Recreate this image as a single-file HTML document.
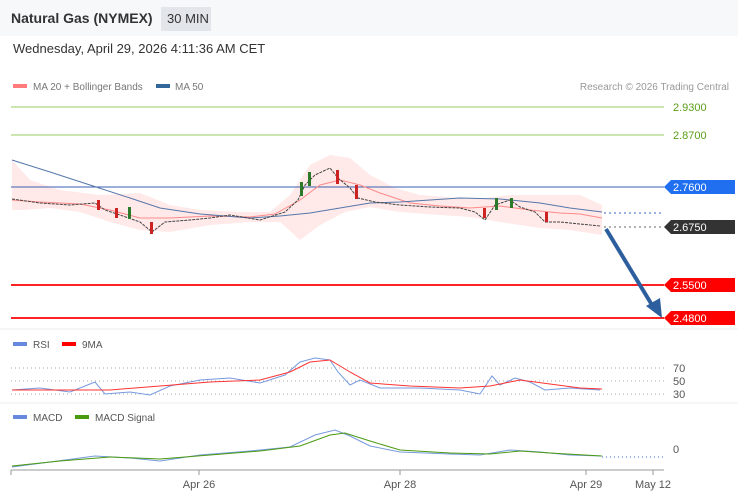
<!DOCTYPE html><html><head><style>
body{margin:0;width:738px;height:500px;overflow:hidden;background:#fff;font-family:"Liberation Sans",sans-serif;position:relative}
.hdr{position:absolute;left:0;top:0;width:738px;height:36px;background:#f7f8fa}
.t{position:absolute;white-space:nowrap}
</style></head><body>
<div class="hdr"></div>
<div class="t" style="left:11px;top:10px;font-size:14px;font-weight:bold;color:#333">Natural Gas (NYMEX)</div>
<div style="position:absolute;left:161px;top:7px;width:50px;height:24px;background:#e2e5ea"></div>
<div class="t" style="left:167px;top:11px;font-size:13px;color:#333">30 MIN</div>
<div class="t" style="left:13px;top:41px;font-size:13px;color:#333">Wednesday, April 29, 2026 4:11:36 AM CET</div>
<svg width="738" height="500" style="position:absolute;left:0;top:0" font-family="Liberation Sans" font-size="11">
<rect x="13" y="84" width="14" height="4" fill="#ff7b7b"/><text x="33" y="90" fill="#777" font-size="10">MA 20 + Bollinger Bands</text>
<rect x="156" y="84" width="14" height="4" fill="#336699"/><text x="175" y="90" fill="#777" font-size="10">MA 50</text>
<text x="729" y="90" fill="#999" font-size="10" text-anchor="end">Research © 2026 Trading Central</text>
<line x1="11" y1="107" x2="664" y2="107" stroke="#9c6" stroke-width="1"/>
<line x1="11" y1="135" x2="664" y2="135" stroke="#9c6" stroke-width="1"/>
<text x="673" y="111" fill="#5a9e1a">2.9300</text><text x="673" y="139" fill="#5a9e1a">2.8700</text>
<polygon points="12,160 30,180 60,190 100,195 140,193 170,205 200,210 240,212 270,212 290,195 310,165 330,155 350,158 370,175 395,188 420,195 460,198 485,198 510,195 540,195 580,195 602,205 602,235 570,230 540,228 500,222 470,217 440,215 400,212 370,207 345,212 320,225 300,240 280,222 250,222 210,225 170,232 140,230 110,222 80,212 50,208 25,210 12,210" fill="#ffe9e9"/>
<line x1="11" y1="187" x2="664" y2="187" stroke="#3a5fb0" stroke-width="1"/>
<line x1="11" y1="285" x2="664" y2="285" stroke="#f22" stroke-width="2"/>
<line x1="11" y1="318" x2="664" y2="318" stroke="#f22" stroke-width="2"/>
<line x1="604" y1="213" x2="664" y2="213" stroke="#36c" stroke-dasharray="2,3"/>
<line x1="604" y1="227" x2="664" y2="227" stroke="#666" stroke-dasharray="2,3"/>
<polyline points="12,200 40,202 80,204 110,210 140,218 170,218 210,216 250,217 275,214 300,200 320,185 340,180 360,185 380,193 410,203 440,206 470,208 500,206 530,210 560,213 580,214 602,218" fill="none" stroke="#ff8a8a" stroke-width="1"/>
<polyline points="12,160 50,172 90,185 130,198 160,208 200,214 250,218 280,216 310,213 340,208 370,203 400,202 460,198 500,199 540,203 570,208 602,212" fill="none" stroke="#5577aa" stroke-width="1"/>
<polyline points="12,199 40,203 70,205 95,203 105,210 120,215 140,222 152,232 165,222 190,220 210,218 230,215 260,220 285,212 298,200 305,185 315,175 330,168 338,178 350,188 358,198 375,202 400,205 430,207 460,208 475,212 485,220 495,205 510,200 520,207 535,212 545,222 560,222 580,224 600,226" fill="none" stroke="#444" stroke-width="1" stroke-dasharray="3,1"/>
<g fill="#c22"><rect x="115" y="208" width="3" height="10"/><rect x="150" y="222" width="3" height="12"/><rect x="336" y="170" width="3" height="14"/><rect x="355" y="185" width="3" height="14"/><rect x="545" y="212" width="3" height="10"/><rect x="97" y="200" width="3" height="10"/><rect x="483" y="208" width="3" height="10"/></g>
<g fill="#2a7a2a"><rect x="128" y="207" width="3" height="12"/><rect x="300" y="182" width="3" height="14"/><rect x="308" y="172" width="3" height="14"/><rect x="495" y="198" width="3" height="12"/><rect x="510" y="198" width="3" height="10"/></g>
<path d="M606 229 L652 305" stroke="#2d5f9e" stroke-width="4"/><polygon points="646,306 662,318 660,298" fill="#2d5f9e"/>
<polygon points="664,187 671,180 735,180 735,194 671,194" fill="#1f6ff0"/><text x="673" y="191" fill="#fff">2.7600</text>
<polygon points="664,227 671,220 735,220 735,234 671,234" fill="#333"/><text x="673" y="231" fill="#fff">2.6750</text>
<polygon points="664,285 671,278 735,278 735,292 671,292" fill="#f00"/><text x="673" y="289" fill="#fff">2.5500</text>
<polygon points="664,318 671,311 735,311 735,325 671,325" fill="#f00"/><text x="673" y="322" fill="#fff">2.4800</text>
<line x1="0" y1="329" x2="738" y2="329" stroke="#eee"/>
<rect x="13" y="342" width="14" height="4" fill="#6688dd"/><text x="33" y="348" fill="#555" font-size="10">RSI</text>
<rect x="62" y="342" width="14" height="4" fill="#f00"/><text x="82" y="348" fill="#555" font-size="10">9MA</text>
<g stroke="#aaa" stroke-dasharray="1,3"><line x1="11" y1="368" x2="664" y2="368"/><line x1="11" y1="381" x2="664" y2="381"/><line x1="11" y1="394" x2="664" y2="394"/></g>
<text x="673" y="372" fill="#555">70</text><text x="673" y="385" fill="#555">50</text><text x="673" y="398" fill="#555">30</text>
<polyline points="12,390 40,388 70,392 95,382 105,394 130,392 150,395 170,386 200,380 230,378 260,383 285,375 300,362 315,358 330,360 338,372 350,385 360,380 380,388 420,388 460,390 480,394 492,376 500,385 515,378 530,382 545,390 570,388 600,390" fill="none" stroke="#7799dd" stroke-width="1"/>
<polyline points="12,390 60,390 110,390 160,386 210,382 260,380 290,372 310,362 330,360 350,372 370,383 410,386 460,388 490,386 520,380 550,384 580,388 602,389" fill="none" stroke="#f33" stroke-width="1"/>
<line x1="0" y1="403" x2="738" y2="403" stroke="#eee"/>
<rect x="13" y="415" width="14" height="4" fill="#6688dd"/><text x="33" y="421" fill="#555" font-size="10">MACD</text>
<rect x="75" y="415" width="14" height="4" fill="#4a9a10"/><text x="95" y="421" fill="#555" font-size="10">MACD Signal</text>
<line x1="602" y1="457" x2="664" y2="457" stroke="#36c" stroke-dasharray="1,3"/>
<text x="673" y="453" fill="#555">0</text>
<polyline points="12,467 50,462 95,456 130,458 160,461 200,455 250,451 290,447 315,435 335,430 350,436 370,446 400,452 450,454 480,455 510,450 540,452 570,455 602,456" fill="none" stroke="#7799dd" stroke-width="1"/>
<polyline points="12,466 60,461 110,457 160,459 210,455 260,451 300,446 330,435 345,433 370,441 400,450 450,453 490,454 520,451 550,453 602,456" fill="none" stroke="#4a9a10" stroke-width="1"/>
<line x1="11" y1="470" x2="664" y2="470" stroke="#999"/>
<g stroke="#999"><line x1="11" y1="470" x2="11" y2="475"/><line x1="199" y1="470" x2="199" y2="475"/><line x1="400" y1="470" x2="400" y2="475"/><line x1="586" y1="470" x2="586" y2="475"/><line x1="653" y1="470" x2="653" y2="475"/></g>
<text x="199" y="488" fill="#555" text-anchor="middle">Apr 26</text><text x="400" y="488" fill="#555" text-anchor="middle">Apr 28</text>
<text x="586" y="488" fill="#555" text-anchor="middle">Apr 29</text><text x="653" y="488" fill="#555" text-anchor="middle">May 12</text>
</svg>
</body></html>
